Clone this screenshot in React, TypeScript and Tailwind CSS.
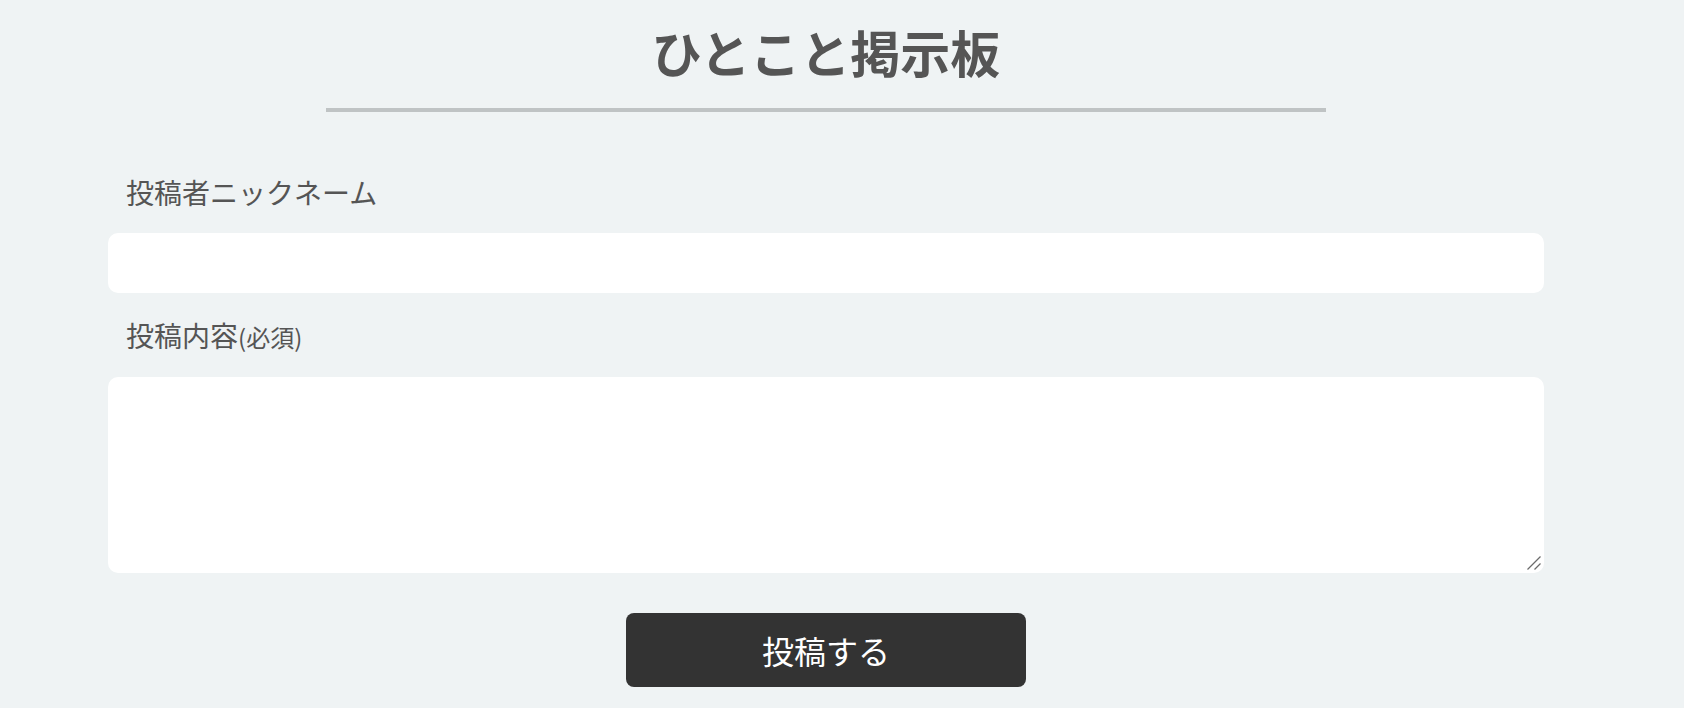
import React from "react";

export default function App() {
  return (
    <div
      className="min-h-[708px] w-full bg-[#eff3f4] pr-[32px]"
      style={{ fontFamily: '"Noto Sans CJK JP", "Noto Sans", sans-serif' }}
    >
      <div className="mx-auto flex w-[1436px] flex-col items-center">
        <h1 className="mt-[14px] text-[50px] font-bold leading-[74px] text-[#555555]">
          ひとこと掲示板
        </h1>
        <div className="mt-[20px] h-[4px] w-[1000px] bg-[#bfc3c4]" />
        <form className="mt-[60px] flex w-full flex-col" onSubmit={(e) => e.preventDefault()}>
          <label className="pl-[18px] text-[28px] leading-[40px] text-[#555555]">
            投稿者ニックネーム
          </label>
          <input
            type="text"
            className="mt-[21px] h-[60px] w-full rounded-[10px] bg-white px-4 text-[24px] outline-none"
          />
          <label className="mt-[22px] pl-[18px] text-[28px] leading-[40px] text-[#555555]">
            投稿内容<span className="text-[24px]">(必須)</span>
          </label>
          <div className="relative mt-[20px]">
            <textarea className="block h-[196px] w-full resize-none rounded-[10px] bg-white p-4 text-[24px] outline-none" />
            <svg
              className="pointer-events-none absolute bottom-[2px] right-[2px]"
              width="16"
              height="16"
              viewBox="0 0 16 16"
            >
              <line x1="1.5" y1="14.5" x2="14.5" y2="1.5" stroke="#6b6b6b" strokeWidth="1.3" />
              <line x1="8.5" y1="14.5" x2="14.5" y2="8.5" stroke="#6b6b6b" strokeWidth="1.3" />
            </svg>
          </div>
          <div className="mt-[40px] flex justify-center">
            <button
              type="submit"
              className="h-[74px] w-[400px] rounded-lg bg-[#333333] text-[32px] leading-none text-white"
            >
              投稿する
            </button>
          </div>
        </form>
      </div>
    </div>
  );
}
